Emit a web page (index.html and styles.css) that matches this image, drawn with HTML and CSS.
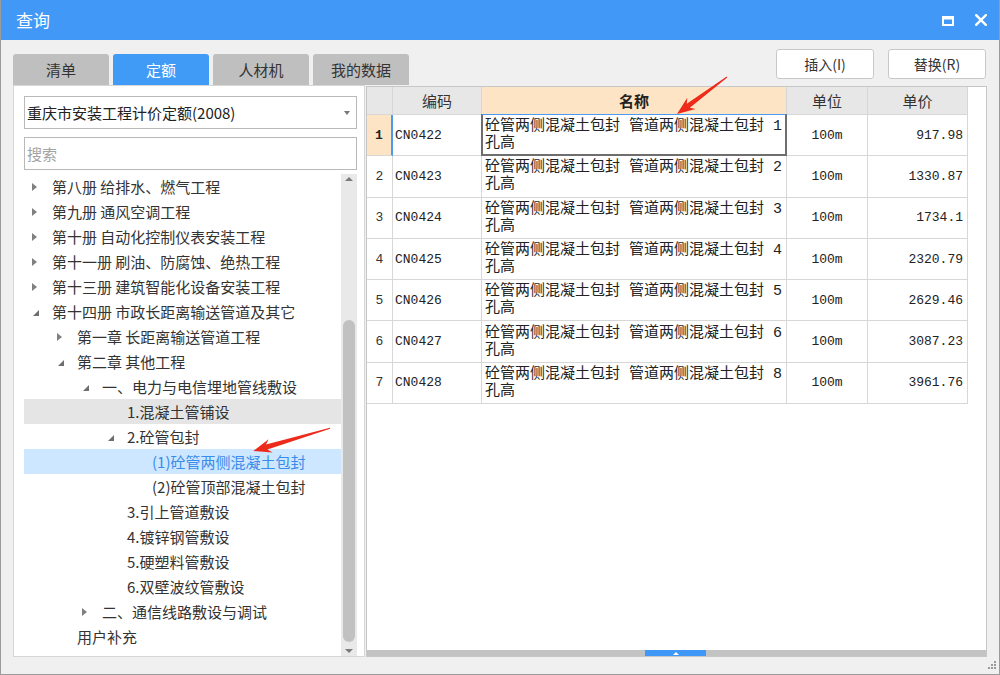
FILE: index.html
```html
<!DOCTYPE html>
<html lang="zh">
<head>
<meta charset="utf-8">
<title>查询</title>
<link rel="stylesheet" href="styles.css">
</head>
<body>
<div class="window">
  <div class="titlebar">
    <span class="title">查询</span>
    <div class="winbtns">
      <svg class="ico-max" width="12" height="10" viewBox="0 0 12 10"><rect x="0" y="0" width="12" height="3.5" fill="#fff"/><rect x="1" y="1" width="10" height="8" fill="none" stroke="#fff" stroke-width="2"/></svg>
      <svg class="ico-close" width="12" height="12" viewBox="0 0 12 12"><path d="M1.2 1.2 L10.8 10.8 M10.8 1.2 L1.2 10.8" stroke="#fff" stroke-width="2.4" stroke-linecap="square"/></svg>
    </div>
  </div>
  <div class="content">
    <div class="leftcol">
      <div class="tabs">
        <div class="tab">清单</div>
        <div class="tab active">定额</div>
        <div class="tab">人材机</div>
        <div class="tab">我的数据</div>
      </div>
      <div class="lpanel">
        <div class="select"><span>重庆市安装工程计价定额(2008)</span><i class="caret"></i></div>
        <div class="search">搜索</div>
        <div class="treewrap">
          <ul class="tree">
            <li class="node l0"><i class="tw"><b class="closed"></b></i><span>第八册 给排水、燃气工程</span></li>
            <li class="node l0"><i class="tw"><b class="closed"></b></i><span>第九册 通风空调工程</span></li>
            <li class="node l0"><i class="tw"><b class="closed"></b></i><span>第十册 自动化控制仪表安装工程</span></li>
            <li class="node l0"><i class="tw"><b class="closed"></b></i><span>第十一册 刷油、防腐蚀、绝热工程</span></li>
            <li class="node l0"><i class="tw"><b class="closed"></b></i><span>第十三册 建筑智能化设备安装工程</span></li>
            <li class="node l0"><i class="tw"><b class="open"></b></i><span>第十四册 市政长距离输送管道及其它</span></li>
            <li class="node l1"><i class="tw"><b class="closed"></b></i><span>第一章 长距离输送管道工程</span></li>
            <li class="node l1"><i class="tw"><b class="open"></b></i><span>第二章 其他工程</span></li>
            <li class="node l2"><i class="tw"><b class="open"></b></i><span>一、电力与电信埋地管线敷设</span></li>
            <li class="node l3 hover"><i class="tw"></i><span>1.混凝土管铺设</span></li>
            <li class="node l3"><i class="tw"><b class="open"></b></i><span>2.砼管包封</span></li>
            <li class="node l4 selected"><i class="tw"></i><span>(1)砼管两侧混凝土包封</span></li>
            <li class="node l4"><i class="tw"></i><span>(2)砼管顶部混凝土包封</span></li>
            <li class="node l3"><i class="tw"></i><span>3.引上管道敷设</span></li>
            <li class="node l3"><i class="tw"></i><span>4.镀锌钢管敷设</span></li>
            <li class="node l3"><i class="tw"></i><span>5.硬塑料管敷设</span></li>
            <li class="node l3"><i class="tw"></i><span>6.双壁波纹管敷设</span></li>
            <li class="node l2"><i class="tw"><b class="closed"></b></i><span>二、通信线路敷设与调试</span></li>
            <li class="node l1"><i class="tw"></i><span>用户补充</span></li>
          </ul>
          <div class="vscroll">
            <div class="vbtn"><i class="tri-up"></i></div>
            <div class="vtrack"><div class="vthumb"></div></div>
            <div class="vbtn"><i class="tri-down"></i></div>
          </div>
        </div>
      </div>
    </div>
    <div class="rightcol">
      <div class="btnrow">
        <button class="btn">插入(I)</button>
        <button class="btn">替换(R)</button>
      </div>
      <div class="rpane">
        <div class="grid">
          <div class="c h"></div><div class="c h">编码</div><div class="c h hsel">名称</div><div class="c h">单位</div><div class="c h">单价</div>

          <div class="c rn cur">1</div><div class="c code">CN0422</div><div class="c name selcell">砼管两侧混凝土包封 管道两侧混凝土包封 1<br>孔高</div><div class="c unit">100m</div><div class="c price">917.98</div>
          <div class="c rn">2</div><div class="c code">CN0423</div><div class="c name">砼管两侧混凝土包封 管道两侧混凝土包封 2<br>孔高</div><div class="c unit">100m</div><div class="c price">1330.87</div>
          <div class="c rn">3</div><div class="c code">CN0424</div><div class="c name">砼管两侧混凝土包封 管道两侧混凝土包封 3<br>孔高</div><div class="c unit">100m</div><div class="c price">1734.1</div>
          <div class="c rn">4</div><div class="c code">CN0425</div><div class="c name">砼管两侧混凝土包封 管道两侧混凝土包封 4<br>孔高</div><div class="c unit">100m</div><div class="c price">2320.79</div>
          <div class="c rn">5</div><div class="c code">CN0426</div><div class="c name">砼管两侧混凝土包封 管道两侧混凝土包封 5<br>孔高</div><div class="c unit">100m</div><div class="c price">2629.46</div>
          <div class="c rn">6</div><div class="c code">CN0427</div><div class="c name">砼管两侧混凝土包封 管道两侧混凝土包封 6<br>孔高</div><div class="c unit">100m</div><div class="c price">3087.23</div>
          <div class="c rn">7</div><div class="c code">CN0428</div><div class="c name">砼管两侧混凝土包封 管道两侧混凝土包封 8<br>孔高</div><div class="c unit">100m</div><div class="c price">3961.76</div>
        </div>
        <div class="hscroll"><div class="hthumb"><i class="tri-up-w"></i></div></div>
      </div>
    </div>
  </div>
  <svg class="grip" width="10" height="10" viewBox="0 0 10 10">
    <rect x="7" y="1" width="2" height="2" fill="#9a9a9a"/>
    <rect x="4" y="4" width="2" height="2" fill="#9a9a9a"/><rect x="7" y="4" width="2" height="2" fill="#9a9a9a"/>
    <rect x="1" y="7" width="2" height="2" fill="#9a9a9a"/><rect x="4" y="7" width="2" height="2" fill="#9a9a9a"/><rect x="7" y="7" width="2" height="2" fill="#9a9a9a"/>
  </svg>
  <svg class="annot" width="1000" height="675" viewBox="0 0 1000 675">
    <polygon fill="#ee2a1b" points="727.3,77.4 689.8,107.7 695.6,108.9 677,114 687.3,97.7 686.8,103.7 726.7,76.6"/>
    <polygon fill="#ee2a1b" points="330.1,428.8 267.4,449.4 272.6,452.6 253.3,451 268.6,439.2 266.0,444.6 329.9,427.8"/>
  </svg>
</div>
</body>
</html>
```

FILE: styles.css
```css
* { box-sizing: border-box; margin: 0; padding: 0; }
html, body { width: 1000px; height: 675px; overflow: hidden; }
body {
  font-family: "Noto Sans CJK SC", "Noto Sans", sans-serif;
  color: #333;
  background: #f0f0f0;
}
.window {
  position: relative;
  width: 1000px;
  height: 675px;
  display: flex;
  flex-direction: column;
  background: #f0f0f0;
  border: 1px solid #9b9b9b;
  border-top: 0;
}
.titlebar {
  height: 40px;
  flex: none;
  background: #4298f7;
  display: flex;
  align-items: center;
  justify-content: space-between;
  padding: 0 12px 0 15px;
  color: #fff;
}
.title { font-size: 17px; line-height: 20px; }
.winbtns { display: flex; align-items: center; gap: 21px; }
.ico-max { display: block; margin-top: 1px; }
.ico-close { display: block; }

.content { flex: 1; display: flex; gap: 1px; padding: 0 12px; min-height: 0; }

.leftcol { width: 352px; flex: none; display: flex; flex-direction: column; }
.tabs { display: flex; gap: 4px; margin-top: 14px; height: 31px; }
.tab {
  width: 96px;
  flex: none;
  background: #bfbfbf;
  border-radius: 3px 3px 0 0;
  font-size: 15px;
  display: flex;
  align-items: center;
  justify-content: center;
  color: #333;
}
.tab.active { background: #409bf7; color: #fff; }

.lpanel {
  height: 572px;
  background: #fff;
  border: 1px solid #d6d6d6;
  padding: 10px 7px 0 10px;
  display: flex;
  flex-direction: column;
}
.select {
  height: 33px;
  flex: none;
  border: 1px solid #b9b9b9;
  display: flex;
  align-items: center;
  justify-content: space-between;
  padding: 0 6px 0 2px;
  font-size: 15px;
  color: #222;
}
.caret {
  width: 0; height: 0;
  border-left: 3.5px solid transparent;
  border-right: 3.5px solid transparent;
  border-top: 4px solid #777;
}
.search {
  height: 33px;
  flex: none;
  margin-top: 8px;
  border: 1px solid #b9b9b9;
  font-size: 15px;
  color: #a3a3a3;
  padding-left: 2px;
  display: flex;
  align-items: center;
}
.treewrap { flex: 1; display: flex; margin-top: 4px; min-height: 0; }
.tree { list-style: none; width: 317px; overflow: hidden; }
.node {
  height: 25px;
  display: flex;
  align-items: center;
  font-size: 15px;
  color: #333;
  white-space: nowrap;
}
.node.l0 { padding-left: 8px; }
.node.l1 { padding-left: 33px; }
.node.l2 { padding-left: 58px; }
.node.l3 { padding-left: 83px; }
.node.l4 { padding-left: 108px; }
.node.hover { background: #e5e5e5; }
.node.selected { background: #cce7ff; color: #3a8cea; }
.tw { width: 20px; flex: none; display: flex; align-items: center; height: 25px; }
.tw .closed {
  width: 0; height: 0;
  border-left: 5px solid #808080;
  border-top: 4px solid transparent;
  border-bottom: 4px solid transparent;
}
.tw .open {
  width: 0; height: 0;
  margin-left: 1px;
  margin-top: 3px;
  border-style: solid;
  border-width: 0 0 6px 6px;
  border-color: transparent transparent #6e6e6e transparent;
}

.vscroll { width: 16px; background: #e9e9e9; display: flex; flex-direction: column; }
.vbtn { height: 10px; flex: none; display: flex; align-items: center; justify-content: center; }
.tri-up { width: 0; height: 0; border-left: 4px solid transparent; border-right: 4px solid transparent; border-bottom: 4px solid #7a7a7a; }
.tri-down { width: 0; height: 0; border-left: 4px solid transparent; border-right: 4px solid transparent; border-top: 4px solid #7a7a7a; }
.vtrack { flex: 1; padding: 0 2px; }
.vthumb { margin-top: 136px; height: 322px; background: #c1c1c1; border-radius: 6px; }

.rightcol { width: 621px; flex: none; display: flex; flex-direction: column; }
.btnrow { display: flex; justify-content: flex-end; gap: 14px; margin-top: 9px; height: 30px; padding-right: 1px; }
.btn {
  width: 98px;
  height: 30px;
  background: #fff;
  border: 1px solid #c9c9c9;
  border-radius: 3px;
  font-family: "Noto Sans CJK SC", "Noto Sans", sans-serif;
  font-size: 14px;
  color: #333;
}
.rpane {
  margin-top: 7px;
  height: 571px;
  background: #fff;
  border: 1px solid #c6c6c6;
  display: flex;
  flex-direction: column;
}
.grid {
  display: grid;
  grid-template-columns: 26px 89px 305px 81px 100px;
  grid-template-rows: 28px repeat(7, 41.3px);
  width: 601px;
}
.c {
  border-right: 1px solid #d7d7d7;
  border-bottom: 1px solid #d7d7d7;
  display: flex;
  align-items: center;
  font-family: "Liberation Mono", monospace;
  font-size: 13px;
  color: #222;
  white-space: nowrap;
}
.c.h {
  background: #e7e7e7;
  justify-content: center;
  font-family: "Noto Sans CJK SC", sans-serif;
  font-size: 15px;
  color: #333;
}
.c.hsel { background: #fde4c4; font-weight: bold; color: #222; }
.c.rn { justify-content: center; color: #333; }
.c.rn.cur { background: #fde4c4; font-weight: bold; color: #222; border-right: 2px solid #4a9af0; }
.c.code { padding-left: 2px; }
.c.name {
  padding-left: 3px;
  font-family: "Liberation Mono", "Noto Sans CJK SC", monospace;
  font-size: 15px;
  line-height: 17px;
}
.c.selcell { position: relative; }
.c.selcell::after {
  content: "";
  position: absolute;
  left: -1px; top: -1px; right: -1px; bottom: -1px;
  border: 2px solid #6e6e6e;
  border-top: 1px solid #4d9bf0;
}
.c.unit { justify-content: center; }
.c.price { justify-content: flex-end; padding-right: 4px; }

.hscroll { margin-top: auto; height: 6px; background: #c3c3c3; }
.hthumb {
  margin-left: 278px;
  width: 61px;
  height: 6px;
  background: #3f98f7;
  display: flex;
  align-items: center;
  justify-content: center;
}
.tri-up-w { width: 0; height: 0; border-left: 3px solid transparent; border-right: 3px solid transparent; border-bottom: 3px solid #fff; }

.grip { position: absolute; right: 2px; bottom: 4px; }
.annot { position: absolute; left: -1px; top: 0; pointer-events: none; }
```
